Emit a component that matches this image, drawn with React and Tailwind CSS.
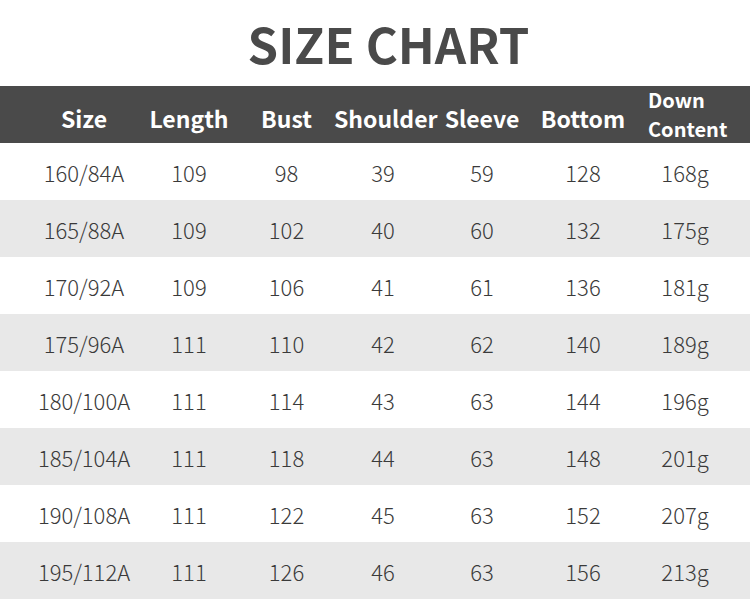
const HEADERS = ['Size', 'Length', 'Bust', 'Shoulder', 'Sleeve', 'Bottom'];

const ROWS = [
    ['160/84A', '109', '98', '39', '59', '128', '168g'],
    ['165/88A', '109', '102', '40', '60', '132', '175g'],
    ['170/92A', '109', '106', '41', '61', '136', '181g'],
    ['175/96A', '111', '110', '42', '62', '140', '189g'],
    ['180/100A', '111', '114', '43', '63', '144', '196g'],
    ['185/104A', '111', '118', '44', '63', '148', '201g'],
    ['190/108A', '111', '122', '45', '63', '152', '207g'],
    ['195/112A', '111', '126', '46', '63', '156', '213g'],
];

const grid = "grid grid-cols-[110px_100px_95px_98px_100px_102px_102px] pl-[29px]";

export default function App() {
    return (
        <div className="w-[750px] h-[607px] bg-white overflow-hidden" style={{ fontFamily: '"Noto Sans CJK SC", "Noto Sans", sans-serif' }}>
            {/* Title */}
            <div className="h-[86px] flex items-center justify-center pl-[27px] pb-[1px]">
                <h1 className="text-[49px] font-bold text-[#4a4a4a] leading-none">SIZE CHART</h1>
            </div>

            {/* Header */}
            <div className={`${grid} h-[57px] bg-[#4a4a4a] text-white font-bold items-center`}>
                {HEADERS.map(h => (
                    <div key={h} className="text-center text-[23px] leading-none pt-[8px] whitespace-nowrap">{h}</div>
                ))}
                <div className="flex flex-col gap-[9px] pl-[14px] text-[20px] leading-none whitespace-nowrap">
                    <span>Down</span>
                    <span>Content</span>
                </div>
            </div>

            {/* Rows */}
            {ROWS.map((row, i) => (
                <div
                    key={row[0]}
                    className={`${grid} h-[57px] items-center text-[22px] font-light text-[#3a3a3a] ${i % 2 === 1 ? 'bg-[#e8e8e8]' : 'bg-white'}`}
                >
                    {row.map((cell, j) => (
                        <div key={j} className="text-center leading-none">{cell}</div>
                    ))}
                </div>
            ))}
        </div>
    );
}
